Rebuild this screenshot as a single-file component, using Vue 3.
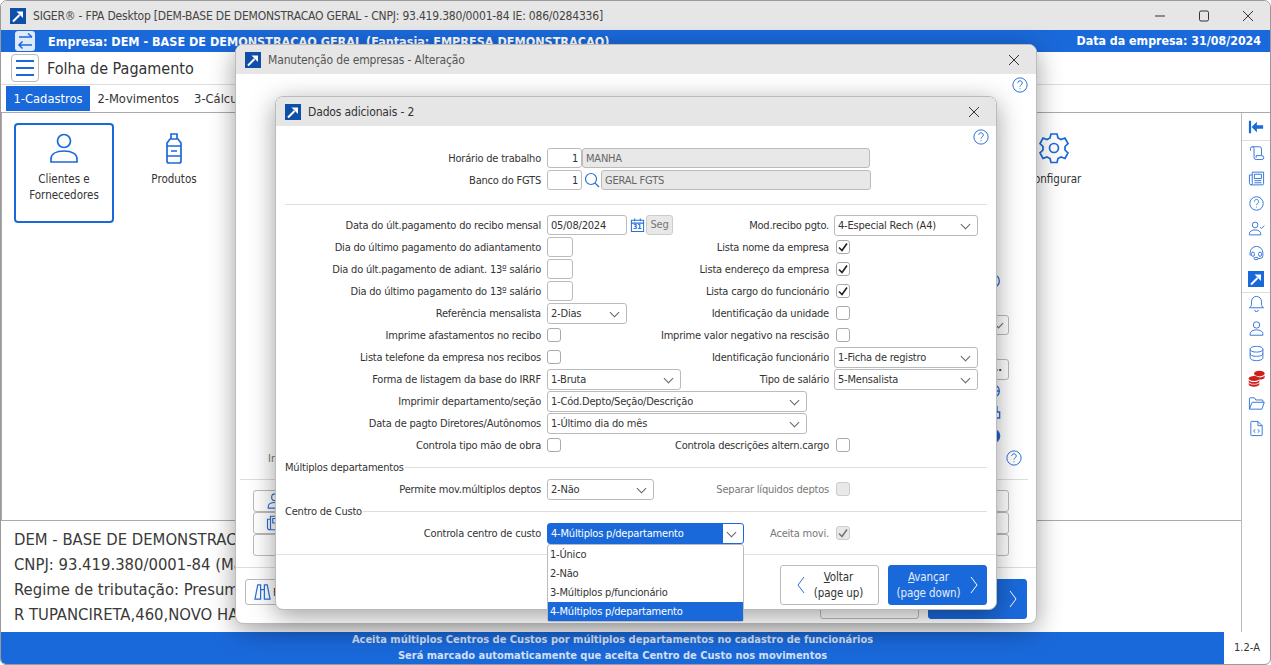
<script setup>
// icones da barra lateral (viewBox 24)
const dockTop = [
  'M3.500 8V5a2.500 2.500 0 0 1 5 0v12.500a3 3 0 0 0 3 3h8a2.500 2.500 0 0 0 0-5.500h-8v3 M6 2.500h10.500A2.500 2.500 0 0 1 19 5v9.500',
  'M6 3h16v16a2 2 0 0 1-2 2H5a3 3 0 0 1-3-3V7h4z M6 7v11a2 2 0 0 1-2 3 M9 6h10v6H9z M9 15h10 M9 18h10',
  'M12 2.500a9.500 9.500 0 1 0 0 19a9.500 9.500 0 0 0 0-19z M9 9.200a3 3 0 1 1 4.500 2.700c-1 .6-1.500 1.200-1.500 2.300 M12 16.400v1.200',
  'M10 3a4 4 0 1 0 0 8a4 4 0 0 0 0-8z M2 21v-1.500c0-3.500 3.500-5.500 8-5.500s8 2 8 5.500V21z M17 10l2 2 4-4',
  'M3 15v-4a9 9 0 0 1 18 0v4a4 4 0 0 1-4 4h-3 M7 10a2 2 0 0 0-2 2v2a2 2 0 0 0 4 0v-2a2 2 0 0 0-2-2z M17 10a2 2 0 0 0-2 2v2a2 2 0 0 0 4 0v-2a2 2 0 0 0-2-2z M10 17.500h3a1.500 1.500 0 0 1 0 3h-3a1.500 1.500 0 0 1 0-3z'
]
const dockBottom = [
  { d: 'M12 2a7 7 0 0 0-7 7v4c0 2-1 3.500-3 5h20c-2-1.500-3-3-3-5V9a7 7 0 0 0-7-7z M9.500 21a2.500 2.500 0 0 0 5 0' },
  { d: 'M12 2.500a4.500 4.500 0 1 0 0 9a4.500 4.500 0 0 0 0-9z M3 21.500v-2c0-3.500 4-5.500 9-5.500s9 2 9 5.500v2z' },
  { d: 'M12 2c-5 0-9 1.500-9 4v12c0 2.500 4 4 9 4s9-1.500 9-4V6c0-2.500-4-4-9-4z M3 6c0 2.500 4 4 9 4s9-1.500 9-4 M3 12c0 2.500 4 4 9 4s9-1.500 9-4' },
  { d: 'M2 7c0-3 20-3 20 0v10H2z', coins: true },
  { d: 'M2 20V5a1 1 0 0 1 1-1h6l2 3h9a1 1 0 0 1 1 1v2 M2 20l3.500-9a1 1 0 0 1 1-.7H23l-3.500 9.700z' },
  { d: 'M5 2h9l6 6v13a1 1 0 0 1-1 1H5a1 1 0 0 1-1-1V3a1 1 0 0 1 1-1z M14 2v6h6 M10 13l-2 2.500 2 2.500 M14 13l2 2.500-2 2.500' }
]
const opcoesCusto = ['1-Único', '2-Não', '3-Múltiplos p/funcionário', '4-Múltiplos p/departamento']
const infoEmpresa = [
  'DEM - BASE DE DEMONSTRACAO GERAL',
  'CNPJ: 93.419.380/0001-84 (Matriz)',
  'Regime de tributação: Presumido',
  'R TUPANCIRETA,460,NOVO HAMBURGO'
]
</script>

<template>
  <div class="janela">
    <header class="titulo">
      <svg class="tile" viewBox="0 0 16 16"><rect width="16" height="16" fill="#0f4fa8" /><path d="M3 13.500l6.500-6.500" stroke="#fff" stroke-width="2" /><path d="M6.500 3.500h6.500V10z" fill="#fff" /></svg>
      <span class="titulo-txt">SIGER® - FPA Desktop [DEM-BASE DE DEMONSTRACAO GERAL - CNPJ: 93.419.380/0001-84 IE: 086/0284336]</span>
      <div class="win-btns">
        <svg viewBox="0 0 12 12"><path d="M1 6h10" /></svg>
        <svg viewBox="0 0 12 12"><rect x="1.500" y="1" width="9" height="10" rx="1.500" /></svg>
        <svg viewBox="0 0 12 12"><path d="M1 1l10 10M11 1L1 11" /></svg>
      </div>
    </header>

    <div class="empresa">
      <span class="troca">
        <svg viewBox="0 0 20 20"><path d="M17 6H4M13 2.500L17 6M4 14h13M7.500 10.500L4 14l3.500 3.500" /></svg>
      </span>
      <b class="empresa-nome">Empresa: DEM - BASE DE DEMONSTRACAO GERAL (Fantasia: EMPRESA DEMONSTRACAO)</b>
      <b class="empresa-data">Data da empresa: 31/08/2024</b>
    </div>

    <div class="modulo">
      <button class="menu"><i></i><i></i><i></i></button>
      <span>Folha de Pagamento</span>
    </div>

    <nav class="abas">
      <span class="aba ativa">1-Cadastros</span>
      <span class="aba">2-Movimentos</span>
      <span class="aba">3-Cálculos</span>
    </nav>

    <div class="meio">
      <div class="coluna">
        <section class="atalhos">
          <div class="atalho sel">
            <svg viewBox="0 0 32 32"><circle cx="16" cy="9" r="6.500" /><path d="M3 30v-3c0-5 5-8 13-8s13 3 13 8v3z" /></svg>
            <span>Clientes e<br />Fornecedores</span>
          </div>
          <div class="atalho">
            <svg viewBox="0 0 32 32"><path d="M13 2h6v5h-6z M12 7h8l3 4v18a2 2 0 0 1-2 2H11a2 2 0 0 1-2-2V11z M9 14h14 M9 24h14 M13 19h6" /></svg>
            <span>Produtos</span>
          </div>
          <div class="atalho config">
            <svg viewBox="0 0 32 32"><path d="M13 2h6l1 4 3 1.500 4-1.500 3 5.500-3 3v3.500l3 3-3 5.500-4-1.500-3 1.500-1 4h-6l-1-4-3-1.500-4 1.500-3-5.500 3-3V14.500l-3-3 3-5.500 4 1.500 3-1.500z" /><circle cx="16" cy="16" r="4.500" /></svg>
            <span>Configurar</span>
          </div>
        </section>
        <section class="info">
          <p v-for="linha in infoEmpresa" :key="linha">{{ linha }}</p>
        </section>
      </div>

      <aside class="dock">
        <div class="dock-grupo">
          <svg class="recolher" viewBox="0 0 18 14"><path d="M1 0h2.500v14H1z M17 5h-7V1L4 7l6 6V9h7z" /></svg>
        </div>
        <div class="dock-grupo lista">
          <svg v-for="d in dockTop" :key="d" class="ic" viewBox="0 0 24 24"><path :d="d" /></svg>
          <svg class="tile tile-dock" viewBox="0 0 16 16"><rect width="16" height="16" fill="#1a69db" /><path d="M3 13.500l6.500-6.500" stroke="#fff" stroke-width="2" /><path d="M6.500 3.500h6.500V10z" fill="#fff" /></svg>
        </div>
        <div class="dock-grupo lista">
          <template v-for="item in dockBottom" :key="item.d">
            <svg v-if="item.coins" class="ic" viewBox="0 0 24 24">
              <g fill="#cc1f1a" stroke="none">
                <ellipse cx="16" cy="5" rx="7.500" ry="4" />
                <path d="M8.500 7.500c1 2 3 3 7.500 3s6.500-1 7.500-3v3c-1 2-3 3-7.500 3s-6.500-1-7.500-3z" />
                <ellipse cx="8.500" cy="12" rx="7.500" ry="3.500" />
                <path d="M1 14c1 2 3 3 7.500 3s6.500-1 7.500-3v2.500c-1 2-3 3-7.500 3s-6.500-1-7.500-3z" />
                <path d="M1 18c1 2 3 2.500 7.500 2.500s6.500-.5 7.500-2.500v2.500c-1 2-3 3-7.500 3s-6.500-1-7.500-3z" />
              </g>
            </svg>
            <svg v-else class="ic" viewBox="0 0 24 24"><path :d="item.d" /></svg>
          </template>
        </div>
      </aside>
    </div>

    <footer class="status">
      <div class="status-msg">
        <span>Aceita múltiplos Centros de Custos por múltiplos departamentos no cadastro de funcionários</span>
        <span>Será marcado automaticamente que aceita Centro de Custo nos movimentos</span>
      </div>
      <span class="versao">1.2-A</span>
    </footer>

    <!-- janela de tras -->
    <div class="dialogo d1">
      <div class="dlg-head">
        <svg class="tile" viewBox="0 0 16 16"><rect width="16" height="16" fill="#0f4fa8" /><path d="M3 13.500l6.500-6.500" stroke="#fff" stroke-width="2" /><path d="M6.500 3.500h6.500V10z" fill="#fff" /></svg>
        <span>Manutenção de empresas - Alteração</span>
        <svg class="fechar" viewBox="0 0 12 12"><path d="M1 1l10 10M11 1L1 11" /></svg>
      </div>
      <svg class="ajuda ajuda-d1" viewBox="0 0 24 24"><path d="M12 2.500a9.500 9.500 0 1 0 0 19a9.500 9.500 0 0 0 0-19z M9 9.200a3 3 0 1 1 4.500 2.700c-1 .6-1.500 1.200-1.500 2.300 M12 16.400v1.200" /></svg>
      <div class="d1-campos">
        <svg class="stub-ic" viewBox="0 0 24 24"><path d="M12 2.500a9.500 9.500 0 1 0 0 19a9.500 9.500 0 0 0 0-19z" /></svg>
        <div class="stub-sel"></div>
        <div class="stub-btn">..</div>
        <svg class="stub-ic ic-a" viewBox="0 0 24 24"><path d="M12 2.500a9.500 9.500 0 1 0 0 19a9.500 9.500 0 0 0 0-19z M3 12h18" /></svg>
        <svg class="stub-ic ic-b" viewBox="0 0 24 24"><path d="M4 4h14v8h4v9H4z" /></svg>
        <svg class="stub-ic ic-c cheio" viewBox="0 0 24 24"><circle cx="12" cy="12" r="10" /></svg>
        <div class="d1-ultima"><span>In</span>
          <svg class="ajuda" viewBox="0 0 24 24"><path d="M12 2.500a9.500 9.500 0 1 0 0 19a9.500 9.500 0 0 0 0-19z M9 9.200a3 3 0 1 1 4.500 2.700c-1 .6-1.500 1.200-1.500 2.300 M12 16.400v1.200" /></svg>
        </div>
      </div>
      <div class="d1-lista">
        <div><svg viewBox="0 0 24 24"><path d="M12 2.500a4.500 4.500 0 1 0 0 9a4.500 4.500 0 0 0 0-9z M3 21.500v-2c0-3.500 4-5.500 9-5.500s9 2 9 5.500v2z" /></svg></div>
        <div><svg viewBox="0 0 24 24"><path d="M6 3h16v16a2 2 0 0 1-2 2H5a3 3 0 0 1-3-3V7h4z M6 7v11a2 2 0 0 1-2 3 M9 6h10v6H9z" /></svg></div>
        <div></div>
      </div>
      <div class="d1-rodape">
        <button class="btn-f">
          <svg viewBox="3 4 18 17"><path d="M4 20l3-15h3v15z M14 20V5h3l3 15z M10 10h4" /></svg>F
        </button>
        <button class="btn-nav d1-voltar"></button>
        <button class="btn-nav azul d1-avancar">
          <svg viewBox="0 0 10 20"><path d="M2 2l6 8-6 8" /></svg>
        </button>
      </div>
    </div>

    <!-- janela da frente -->
    <div class="dialogo d2">
      <div class="dlg-head">
        <svg class="tile" viewBox="0 0 16 16"><rect width="16" height="16" fill="#0f4fa8" /><path d="M3 13.500l6.500-6.500" stroke="#fff" stroke-width="2" /><path d="M6.500 3.500h6.500V10z" fill="#fff" /></svg>
        <span class="dlg-nome">Dados adicionais - 2</span>
        <svg class="fechar" viewBox="0 0 12 12"><path d="M1 1l10 10M11 1L1 11" /></svg>
      </div>
      <svg class="ajuda ajuda-d2" viewBox="0 0 24 24"><path d="M12 2.500a9.500 9.500 0 1 0 0 19a9.500 9.500 0 0 0 0-19z M9 9.200a3 3 0 1 1 4.500 2.700c-1 .6-1.500 1.200-1.500 2.300 M12 16.400v1.200" /></svg>

      <div class="form">
        <div class="linha">
          <div class="lado">
            <label>Horário de trabalho</label>
            <input class="num" value="1" />
            <input class="desab w288" value="MANHA" disabled />
          </div>
        </div>
        <div class="linha">
          <div class="lado">
            <label>Banco do FGTS</label>
            <input class="num" value="1" />
            <svg class="lupa" viewBox="0 0 16 16"><circle cx="7" cy="7" r="5.500" /><path d="M11 11l4 4" /></svg>
            <input class="desab w270" value="GERAL FGTS" disabled />
          </div>
        </div>
        <hr class="sep" />

        <div class="linha">
          <div class="lado">
            <label>Data do últ.pagamento do recibo mensal</label>
            <input class="data" value="05/08/2024" />
            <span class="cal">
              <svg viewBox="0 0 16 16"><path d="M1.500 3h13v12h-13z M1.500 6h13 M5 1v3 M11 1v3" /></svg>
              <b>31</b>
            </span>
            <span class="seg">Seg</span>
          </div>
          <div class="lado dir">
            <label>Mod.recibo pgto.</label>
            <div class="campo-dir"><div class="select w144">4-Especial Rech (A4)</div></div>
          </div>
        </div>
        <div class="linha">
          <div class="lado"><label>Dia do último pagamento do adiantamento</label><input class="dia" /></div>
          <div class="lado dir">
            <label>Lista nome da empresa</label>
            <div class="campo-dir"><span class="check on"><svg viewBox="0 0 12 12"><path d="M2 6.500l3 3 5-7" /></svg></span></div>
          </div>
        </div>
        <div class="linha">
          <div class="lado"><label>Dia do últ.pagamento de adiant. 13º salário</label><input class="dia" /></div>
          <div class="lado dir">
            <label>Lista endereço da empresa</label>
            <div class="campo-dir"><span class="check on"><svg viewBox="0 0 12 12"><path d="M2 6.500l3 3 5-7" /></svg></span></div>
          </div>
        </div>
        <div class="linha">
          <div class="lado"><label>Dia do último pagamento do 13º salário</label><input class="dia" /></div>
          <div class="lado dir">
            <label>Lista cargo do funcionário</label>
            <div class="campo-dir"><span class="check on"><svg viewBox="0 0 12 12"><path d="M2 6.500l3 3 5-7" /></svg></span></div>
          </div>
        </div>
        <div class="linha">
          <div class="lado"><label>Referência mensalista</label><div class="select w80">2-Dias</div></div>
          <div class="lado dir">
            <label>Identificação da unidade</label>
            <div class="campo-dir"><span class="check"></span></div>
          </div>
        </div>
        <div class="linha">
          <div class="lado"><label>Imprime afastamentos no recibo</label><span class="check"></span></div>
          <div class="lado dir">
            <label>Imprime valor negativo na rescisão</label>
            <div class="campo-dir"><span class="check"></span></div>
          </div>
        </div>
        <div class="linha">
          <div class="lado"><label>Lista telefone da empresa nos recibos</label><span class="check"></span></div>
          <div class="lado dir">
            <label>Identificação funcionário</label>
            <div class="campo-dir"><div class="select w144">1-Ficha de registro</div></div>
          </div>
        </div>
        <div class="linha">
          <div class="lado"><label>Forma de listagem da base do IRRF</label><div class="select w134">1-Bruta</div></div>
          <div class="lado dir">
            <label>Tipo de salário</label>
            <div class="campo-dir"><div class="select w144">5-Mensalista</div></div>
          </div>
        </div>
        <div class="linha">
          <div class="lado"><label>Imprimir departamento/seção</label><div class="select w260">1-Cód.Depto/Seção/Descrição</div></div>
        </div>
        <div class="linha">
          <div class="lado"><label>Data de pagto Diretores/Autônomos</label><div class="select w260">1-Último dia do mês</div></div>
        </div>
        <div class="linha">
          <div class="lado"><label>Controla tipo mão de obra</label><span class="check"></span></div>
          <div class="lado dir">
            <label>Controla descrições altern.cargo</label>
            <div class="campo-dir"><span class="check"></span></div>
          </div>
        </div>

        <div class="secao"><span>Múltiplos departamentos</span></div>
        <div class="linha">
          <div class="lado"><label>Permite mov.múltiplos deptos</label><div class="select w107">2-Não</div></div>
          <div class="lado dir apagado">
            <label>Separar líquidos deptos</label>
            <div class="campo-dir"><span class="check desl"></span></div>
          </div>
        </div>

        <div class="secao"><span>Centro de Custo</span></div>
        <div class="linha">
          <div class="lado">
            <label>Controla centro de custo</label>
            <div class="select w197 focado"><span class="sel-txt">4-Múltiplos p/departamento</span></div>
          </div>
          <div class="lado dir apagado">
            <label>Aceita movi.</label>
            <div class="campo-dir"><span class="check desl on"><svg viewBox="0 0 12 12"><path d="M2 6.500l3 3 5-7" /></svg></span></div>
          </div>
        </div>

        <ul class="dropdown">
          <li v-for="(op, i) in opcoesCusto" :key="op" :class="{ marcada: i === 3 }">{{ op }}</li>
        </ul>
      </div>

      <div class="dlg-rodape">
        <button class="btn-nav">
          <svg viewBox="0 0 10 20"><path d="M8 2l-6 8 6 8" /></svg>
          <span><u>V</u>oltar<br />(page up)</span>
        </button>
        <button class="btn-nav azul">
          <span><u>A</u>vançar<br />(page down)</span>
          <svg viewBox="0 0 10 20"><path d="M2 2l6 8-6 8" /></svg>
        </button>
      </div>
    </div>
  </div>
</template>

<style>
html, body { margin: 0; background: #fff; }
</style>

<style scoped>
* { box-sizing: border-box; }

.janela {
  position: relative;
  width: 1271px;
  height: 665px;
  overflow: hidden;
  display: flex;
  flex-direction: column;
  font-family: "DejaVu Sans Condensed", "DejaVu Sans", sans-serif;
  font-size: 11px;
  color: #333;
  background: #fff;
  border: 1px solid #9a9a9a;
  border-radius: 7px 7px 6px 6px;
}

.tile { width: 16px; height: 16px; flex: none; }

/* barra de titulo */
.titulo {
  height: 29px;
  flex: none;
  display: flex;
  align-items: center;
  background: #e6e6e6;
  padding-left: 9px;
  gap: 7px;
}
.titulo-txt { font-size: 12px; letter-spacing: -0.2px; color: #444; }
.win-btns { margin-left: auto; display: flex; gap: 32px; padding-right: 16px; }
.win-btns svg { width: 12px; height: 12px; fill: none; stroke: #333; stroke-width: 1; }

.empresa {
  height: 22px;
  flex: none;
  display: flex;
  align-items: center;
  background: #1a69db;
  color: #fff;
  padding: 0 9px 0 14px;
}
.troca {
  width: 20px;
  height: 20px;
  background: #dfe9f8;
  border-radius: 3px;
  display: flex;
  margin-right: 13px;
}
.troca svg { fill: none; stroke: #1a69db; stroke-width: 1.500; }
.empresa-nome { font-size: 12.500px; }
.empresa-data { margin-left: auto; font-size: 12.300px; }

.modulo {
  height: 33px;
  flex: none;
  display: flex;
  align-items: center;
  gap: 8px;
  padding-left: 10px;
  border-bottom: 1px solid #ddd;
  font-size: 16px;
}
.menu {
  width: 28px;
  height: 28px;
  padding: 0 4px;
  display: flex;
  flex-direction: column;
  justify-content: center;
  gap: 5px;
  background: #fff;
  border: 1px solid #bbb;
  border-radius: 4px;
}
.menu i { height: 2px; background: #1a69db; }

.abas {
  height: 28px;
  flex: none;
  display: flex;
  padding: 1px 0 1px 5px;
  border-bottom: 1px solid #aaa;
  font-size: 12.800px;
}
.aba { padding: 0 7.500px; line-height: 25px; }
.aba.ativa { background: #1a69db; color: #fff; }

.meio { flex: 1; display: flex; min-height: 0; }
.coluna { flex: 1; display: flex; flex-direction: column; min-width: 0; }

.atalhos {
  height: 408px;
  flex: none;
  display: flex;
  padding: 10px 12px;
  gap: 10px;
  border-left: 1px solid #aaa;
  border-bottom: 1px solid #aaa;
}
.atalho {
  width: 100px;
  height: 100px;
  display: flex;
  flex-direction: column;
  align-items: center;
  padding-top: 7px;
  text-align: center;
  line-height: 16px;
  font-size: 11.500px;
  border: 2px solid transparent;
  border-radius: 4px;
}
.atalho.sel { border-color: #1a69db; }
.atalho svg {
  width: 32px;
  height: 32px;
  margin-bottom: 7px;
  fill: none;
  stroke: #1a69db;
  stroke-width: 1.700;
}
.atalho.config { margin-left: 770px; }

.info { flex: 1; padding: 6px 13px; font-size: 16.500px; color: #3a3a3a; }
.info p { margin: 0; line-height: 25px; white-space: nowrap; }

.dock {
  width: 29px;
  flex: none;
  border-left: 1px solid #bbb;
  display: flex;
  flex-direction: column;
  align-items: center;
}
.dock-grupo {
  width: 100%;
  display: flex;
  flex-direction: column;
  align-items: center;
  border-bottom: 1px solid #ddd;
}
.dock-grupo:last-child { border-bottom: 0; }
.recolher { width: 16px; height: 14px; margin: 7px 0 6px; fill: #1a69db; }
.lista { gap: 8px; padding: 4px 0 5px; }
.lista:last-child { gap: 8.100px; padding-top: 2px; }
.ic { width: 17px; height: 17px; fill: none; stroke: #2a6fd6; stroke-width: 1.300; }
.tile-dock { margin-top: 1px; }

.status {
  height: 32px;
  flex: none;
  display: flex;
  background: #1a69db;
}
.status-msg {
  flex: 1;
  display: flex;
  flex-direction: column;
  align-items: center;
  justify-content: center;
  font-weight: 700;
  font-size: 11px;
  line-height: 16px;
  color: #d5e0f2;
}
.versao {
  width: 46px;
  background: #fff;
  text-align: center;
  line-height: 32px;
  font-size: 11px;
}

/* janelas sobrepostas */
.dialogo {
  position: absolute;
  background: #fff;
  border: 1px solid #bbb;
  border-radius: 8px;
  box-shadow: 0 6px 26px rgba(0, 0, 0, 0.38);
  display: flex;
  flex-direction: column;
}
.d1 { left: 234px; top: 43px; width: 802px; height: 580px; }
.d2 { left: 274px; top: 95px; width: 722px; height: 514px; }

.dlg-head {
  height: 29px;
  flex: none;
  display: flex;
  align-items: center;
  gap: 7px;
  padding: 0 16px 0 9px;
  background: #e6e6e6;
  border-radius: 7px 7px 0 0;
  font-size: 12px;
  letter-spacing: -0.15px;
  color: #555;
}
.dlg-nome { color: #333; }
.fechar { margin-left: auto; width: 12px; height: 12px; fill: none; stroke: #333; stroke-width: 1; }

.ajuda { width: 18px; height: 18px; flex: none; fill: none; stroke: #2a6fd6; stroke-width: 1.300; }
.ajuda-d1 { position: absolute; right: 7px; top: 31px; }
.ajuda-d2 { position: absolute; right: 6px; top: 31px; }

.d1-campos {
  height: 406px;
  flex: none;
  margin: 0 8px 0 4px;
  display: flex;
  flex-direction: column;
  align-items: flex-end;
  padding: 199px 19px 0 0;
  border-bottom: 1px solid #ddd;
}
.stub-ic { width: 16px; height: 16px; flex: none; margin-right: 8px; fill: none; stroke: #2a6fd6; stroke-width: 2; }
.stub-ic.cheio { fill: #1a5fc8; }
.ic-a { margin-top: 3px; }
.ic-b { margin-top: 5px; }
.ic-c { margin-top: 8px; }
.stub-sel {
  position: relative;
  width: 40px;
  height: 20px;
  margin-top: 26px;
  border: 1px solid #bbb;
  border-radius: 3px;
}
.stub-sel::after {
  content: "";
  position: absolute;
  right: 6px;
  top: 4px;
  width: 6px;
  height: 6px;
  border-right: 1px solid #666;
  border-bottom: 1px solid #666;
  transform: rotate(45deg);
}
.stub-btn {
  width: 40px;
  height: 21px;
  margin-top: 24px;
  border: 1px solid #bbb;
  border-radius: 3px;
  text-align: right;
  padding-right: 6px;
  font-weight: 700;
  line-height: 16px;
}
.d1-ultima {
  align-self: stretch;
  display: flex;
  justify-content: space-between;
  align-items: center;
  margin: 5px -14px 0 28px;
  color: #777;
}
.d1-lista { margin: 10px 27px 0 17px; display: flex; flex-direction: column; }
.d1-lista div { height: 22px; padding: 1px 0 0 12px; border: 1px solid #bbb; border-radius: 3px; }
.d1-lista svg { display: block; width: 18px; height: 18px; fill: none; stroke: #2a6fd6; stroke-width: 1.500; }
.d1-rodape {
  flex: 1;
  margin: 11px 0 0 0;
  padding: 11px 9px 0;
  border-top: 1px solid #ddd;
  display: flex;
  gap: 9px;
}
.btn-f {
  width: 40px;
  height: 26px;
  display: flex;
  align-items: center;
  gap: 2px;
  background: #fff;
  border: 1px solid #bbb;
  border-radius: 3px;
  padding: 0 0 0 8px;
  font: inherit;
  color: #333;
}
.btn-f svg { width: 17px; height: 18px; flex: none; fill: none; stroke: #2a6fd6; stroke-width: 1.300; }
.d1-voltar { margin-left: auto; }

/* formulario */
.form { position: relative; flex: 1; padding-top: 21px; border-bottom: 1px solid #e2e2e2; letter-spacing: -0.2px; }
.linha {
  height: 22px;
  display: flex;
  justify-content: space-between;
  align-items: center;
  padding-right: 18px;
}
.lado { display: flex; align-items: center; }
.lado > label { width: 265px; text-align: right; margin-right: 6px; }
.lado.dir > label { width: auto; margin-right: 5px; }
.campo-dir { width: 144px; display: flex; }
.campo-dir .check { margin-left: 2px; }
.apagado { color: #777; }

input {
  height: 20px;
  border: 1px solid #bbb;
  border-radius: 3px;
  font: inherit;
  letter-spacing: inherit;
  color: #333;
  padding: 0 3px;
  background: #fff;
  outline: none;
}
.num { width: 35px; text-align: right; }
.data { width: 80px; }
.dia { width: 26px; }
.desab { background: #e8e8e8; color: #666; }
.w288 { width: 288px; }
.w270 { width: 270px; }
.lupa { width: 16px; height: 16px; margin: 0 1px 0 2px; fill: none; stroke: #2a6fd6; stroke-width: 1.200; }
.cal { position: relative; width: 15px; height: 16px; margin: 0 1px 0 3px; }
.cal svg { width: 15px; height: 16px; fill: none; stroke: #2a6fd6; stroke-width: 1.100; }
.cal b {
  position: absolute;
  left: 3px;
  top: 6px;
  font-size: 7px;
  line-height: 9px;
  color: #2a6fd6;
}
.seg {
  width: 27px;
  height: 20px;
  background: #e8e8e8;
  border: 1px solid #ccc;
  border-radius: 3px;
  color: #777;
  text-align: center;
  line-height: 17px;
}

.select {
  position: relative;
  height: 21px;
  border: 1px solid #bbb;
  border-radius: 3px;
  padding-left: 3px;
  line-height: 19px;
  background: #fff;
}
.select::after {
  content: "";
  position: absolute;
  right: 8px;
  top: 5px;
  width: 6px;
  height: 6px;
  border-right: 1px solid #666;
  border-bottom: 1px solid #666;
  transform: rotate(45deg);
}
.w80 { width: 80px; }
.w107 { width: 107px; }
.w134 { width: 134px; }
.w144 { width: 144px; }
.w197 { width: 197px; }
.w260 { width: 260px; }
.focado { border-color: #1a69db; padding: 0; }
.sel-txt {
  display: block;
  width: 175px;
  height: 19px;
  padding-left: 3px;
  background: #1a69db;
  color: #fff;
}

.check {
  width: 14px;
  height: 14px;
  border: 1px solid #aaa;
  border-radius: 3px;
  background: #fff;
  display: flex;
}
.check svg { fill: none; stroke: #222; stroke-width: 1.600; }
.check.desl { background: #e8e8e8; border-color: #ccc; }
.check.desl svg { stroke: #777; }

.sep { height: 1px; margin: 13px 9px 9px; border: 0; background: #ddd; }

.secao {
  height: 22px;
  padding: 1px 9px 0;
  display: flex;
  align-items: center;
  gap: 1px;
}
.secao::after { content: ""; flex: 1; height: 1px; margin-top: -1px; background: #ddd; }

.dropdown {
  position: absolute;
  left: 271px;
  top: 418px;
  width: 197px;
  margin: 0;
  padding: 0;
  list-style: none;
  background: #fff;
  border: 1px solid #bbb;
  border-radius: 3px;
  z-index: 2;
}
.dropdown li { height: 19px; line-height: 19px; padding-left: 2px; }
.dropdown .marcada { background: #1a69db; color: #fff; }

.dlg-rodape {
  height: 54px;
  flex: none;
  display: flex;
  justify-content: flex-end;
  align-items: flex-start;
  gap: 9px;
  padding: 10px 9px 0;
}
.btn-nav {
  width: 99px;
  height: 40px;
  display: flex;
  align-items: center;
  justify-content: center;
  gap: 8px;
  background: #fff;
  border: 1px solid #bbb;
  border-radius: 3px;
  font: inherit;
  font-size: 11.500px;
  letter-spacing: -0.1px;
  line-height: 16px;
  color: #333;
  padding: 0;
}
.btn-nav svg { width: 10px; height: 20px; fill: none; stroke: #2a6fd6; stroke-width: 1; }
.btn-nav.azul { background: #1a69db; border-color: #1a69db; color: #e4edfa; }
.btn-nav.azul svg { stroke: #fff; }
.d1-avancar { justify-content: flex-end; padding-right: 8px; }
</style>
